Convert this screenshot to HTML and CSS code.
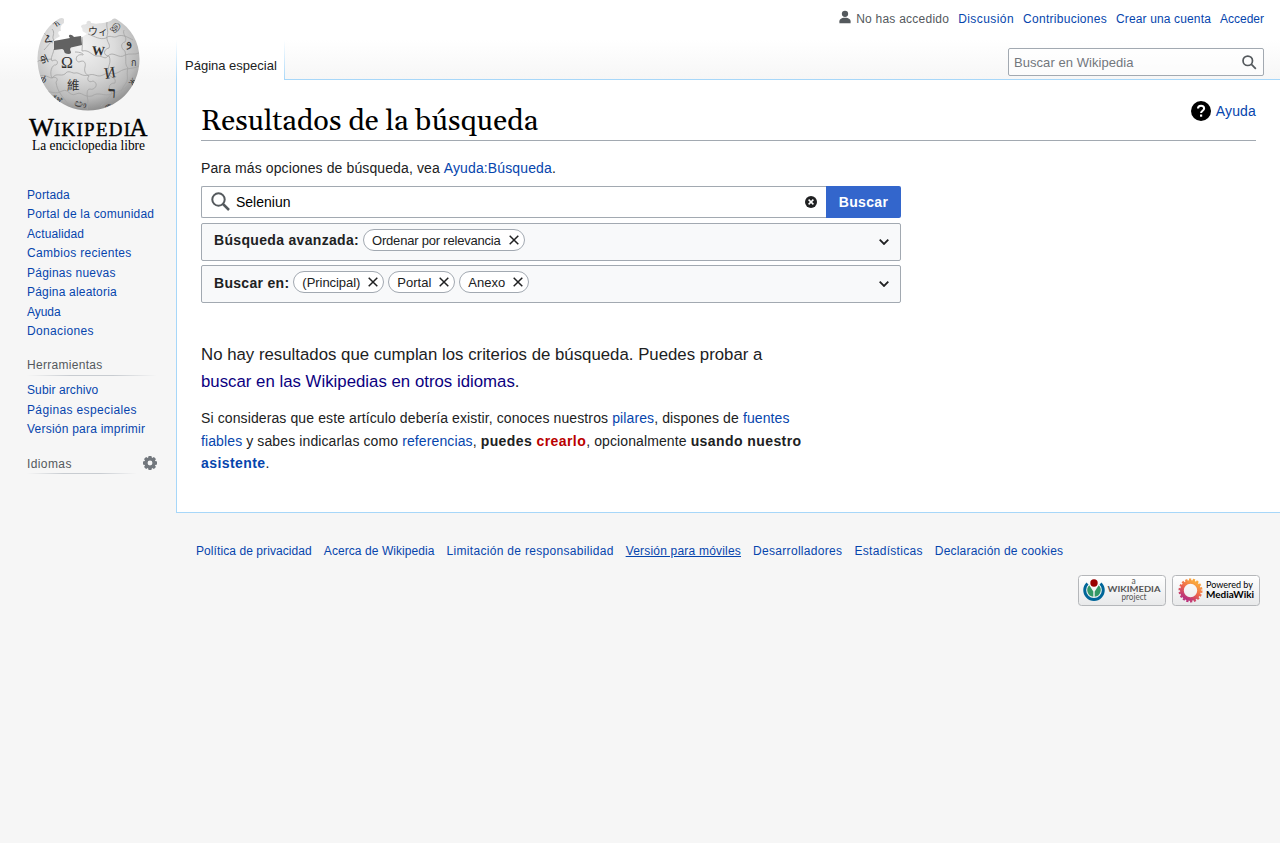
FILE: index.html
```html
<!DOCTYPE html>
<html lang="es">
<head>
<meta charset="utf-8">
<title>Resultados de la búsqueda - Wikipedia, la enciclopedia libre</title>
<link rel="stylesheet" href="styles.css">
</head>
<body>
<div class="page">
<aside class="sidebar">
<a class="logo">
<svg width="160" height="160" viewBox="8 0 160 160">
<defs>
<radialGradient id="globe" cx="0.42" cy="0.3" r="0.74">
<stop offset="0" stop-color="#f3f3f3"/><stop offset="0.45" stop-color="#dcdcdc"/><stop offset="0.78" stop-color="#b8b8b8"/><stop offset="1" stop-color="#858585"/>
</radialGradient>
<clipPath id="ball"><path id="shape" d="M64 19 C62 17 60 18 57 20 C46 27 38 41 37.500 58 C37 88 60 110.500 88 110.500 C117 110.500 139.500 88 139.500 59 C139.500 42 131 28 117 19.500 C115 17.500 112 19 112 20 C107 23 102 23 98 23.500 C95 24 92 23 91 23 C91 20 86 20 86.500 24 C84 25 81 24 81 27 C84 29 81 31 84 32 L87 34 L82 37 L73 39 L54 41 C55 38 58 38 60 36 C57 33 58 31 61 31 C60 27 61 25 64 23 Z"/></clipPath>
</defs>
<use href="#shape" fill="url(#globe)"/>
<g clip-path="url(#ball)">
<g fill="none" stroke="#a3a3a3" stroke-width="0.800">
<path d="M54 49 C53 55 50 58 52 61 C57 58 59 63 56 65 C52 64 49 73 52 78 C56 76 59 79 56 82 C57 92 64 98 68 104"/>
<path d="M37 62 C42 58 47 60 52 59 M40 76 C45 74 49 78 52 78 C57 72 60 77 65 74 C68 69 73 74 75 73 C80 72 81 77 89 75 C95 73 97 78 103 75 C110 71 112 76 119 72 C126 67 131 70 139 66"/>
<path d="M75 52 C81 52 84 54 83 55 C76 53 74 61 79 62 C85 59 86 64 85 67 C84 71 85 74 89 76 C86 80 89 83 93 81 C100 84 94 91 90 89 C86 89 87 96 88 101 C87 105 88 107 87 110"/>
<path d="M82 37 C83 43 82 47 82 51 C90 49 92 57 98 56 C103 56 105 60 108 56 C113 50 119 60 125 55 C130 53 135 55 139 53 M88 34 C96 37 100 40 106 38 C110 34 113 39 118 36 C123 34 129 38 133 40"/>
<path d="M107 22 C106 28 109 31 107 36 C106 42 111 44 109 48 C103 49 103 56 109 56 C112 63 107 67 108 72 C108 78 117 76 115 83 C108 83 108 89 112 93 C109 98 105 101 101 106"/>
<path d="M124 30 C122 35 128 37 125 42 C120 43 121 49 125 51 C127 60 124 64 128 68 C126 73 129 79 126 83 C122 88 121 94 115 97 M45 92 C53 91 55 95 62 91 C69 88 69 97 76 94 C82 91 84 98 92 96 C99 91 104 97 111 94 C120 91 123 90 130 84 M52 29 C56 33 51 37 54 40 C49 43 48 46 44 50 M44 33 C49 37 48 41 53 43"/>
</g>
<g class="globe-glyphs">
<text x="61" y="68" font-size="16">Ω</text>
<text x="92" y="55" font-size="13" font-weight="bold" transform="rotate(3 98 51)" textLength="13" lengthAdjust="spacingAndGlyphs">W</text>
<text x="104" y="78" font-size="16" transform="rotate(-10 110 72)">И</text>
<text x="67" y="90" font-size="12.500" class="han">維</text>
<text x="88" y="35" font-size="10" class="han">ウィ</text>
<text x="108" y="98" font-size="16" font-weight="bold" transform="rotate(3 112 93)">ר</text>
<text x="112" y="31" font-size="9" transform="rotate(35 117 27)">இ</text>
<text x="125" y="46" font-size="13" transform="rotate(-18 128 42)">و</text>
<text x="40" y="63" font-size="11" transform="rotate(65 44 59)">क</text>
<text x="41" y="83" font-size="10" transform="rotate(30 45 78)">ф</text>
<text x="44" y="43" font-size="11" transform="rotate(-25 48 40)">Հ</text>
<text x="74" y="107" font-size="10" transform="rotate(9 78 105)">ඐ</text>
<text x="53" y="100" font-size="8" transform="rotate(38 56 97)">ჯฬ</text>
<text x="131" y="66" font-size="9">ก</text>
<text x="129" y="85" font-size="8" transform="rotate(-52 132 82)">Ж</text>
<text x="54" y="27" font-size="8" transform="rotate(-35 56 25)">Ћ</text>
<text x="104" y="109" font-size="7" transform="rotate(-24 108 106)">ም</text>
</g>
</g>
<path d="M54 41 L70 38 C67 35 71 33 74 37 L81 36 L82 45 L71 47.500 C68 50 74 53 69 54 C62 54 66 50 62 49 L54 50 Z" fill="#626262"/>
<g class="wordmark"><text x="29" y="135.500" font-size="25" textLength="25" lengthAdjust="spacingAndGlyphs">W</text><text x="54" y="135.500" font-size="19" textLength="76" lengthAdjust="spacing">IKIPEDI</text><text x="129.500" y="135.500" font-size="25" textLength="18" lengthAdjust="spacingAndGlyphs">A</text>
<text class="tagline" x="32" y="150" font-size="14" textLength="113" lengthAdjust="spacingAndGlyphs">La enciclopedia libre</text></g>
</svg>
</a>
<nav class="portal main-nav"><a>Portada</a><a>Portal de la comunidad</a><a>Actualidad</a><a>Cambios recientes</a><a>Páginas nuevas</a><a>Página aleatoria</a><a>Ayuda</a><a>Donaciones</a></nav>
<nav class="portal tools"><h3>Herramientas</h3><a>Subir archivo</a><a>Páginas especiales</a><a>Versión para imprimir</a></nav>
<div class="portal languages"><h3>Idiomas</h3><svg width="14" height="14" viewBox="0 0 20 20"><g fill="#72777d"><path id="tooth" d="M8 0h4l1.500 5h-7zM6.500 15h7L12 20H8z"/><use href="#tooth" transform="rotate(45 10 10)"/><use href="#tooth" transform="rotate(90 10 10)"/><use href="#tooth" transform="rotate(135 10 10)"/></g><circle cx="10" cy="10" r="5.500" fill="none" stroke="#72777d" stroke-width="4"/></svg></div>
</aside>
<div class="main">
<header class="header">
<nav class="personal"><span class="anon"><svg width="14" height="14" viewBox="0 0 20 20" fill="#54595d"><path d="M10 11c-5.920 0-8 3-8 5v3h16v-3c0-2-2.080-5-8-5z"/><circle cx="10" cy="5.500" r="4.500"/></svg>No has accedido</span><a>Discusión</a><a>Contribuciones</a><a>Crear una cuenta</a><a>Acceder</a></nav>
<div class="tabs"><span class="tab">Página especial</span><div class="quick-search"><span>Buscar en Wikipedia</span><svg width="15" height="15" viewBox="0 0 13 13"><g fill="none" stroke="#54595d" stroke-width="1.500"><path d="M12 12 8 8"/><circle cx="5" cy="5" r="4.100"/></g></svg></div></div>
</header>
<main class="content">
<div class="heading"><h1>Resultados de la búsqueda</h1><a class="help"><svg width="20" height="20" viewBox="0 0 20 20"><circle cx="10" cy="10" r="10"/><path d="M7 7.600C7 3.800 13.100 3.800 13.100 7.500C13.100 9.800 10.100 9.700 10.100 12" fill="none" stroke="#fff" stroke-width="2.100"/><path d="M9 13.500h2.200v2.200H9z" fill="#fff"/></svg>Ayuda</a></div>
<p class="intro">Para más opciones de búsqueda, vea <a>Ayuda:Búsqueda</a>.</p>
<div class="search-form">
<div class="search-row"><div class="search-input"><svg width="20" height="20" viewBox="0 0 20 20" fill="none" stroke="#54595d" stroke-width="2"><circle cx="7.500" cy="7.500" r="6.200"/><path d="m12 12 6 6" stroke-width="2.500"/></svg><span>Seleniun</span><svg class="clear" width="12" height="12" viewBox="0 0 20 20"><circle cx="10" cy="10" r="10" fill="#202122"/><path d="m6 6 8 8m0-8-8 8" stroke="#fff" stroke-width="2.500"/></svg></div><button>Buscar</button></div>
<div class="option"><b>Búsqueda avanzada:</b><span class="chip long">Ordenar por relevancia<svg class="x" viewBox="0 0 10 10"><path d="m.7.7 8.600 8.600m0-8.600L.7 9.300"/></svg></span><svg class="chevron" viewBox="0 0 10 6"><path d="m.7.700 4.300 4.300L9.300.7"/></svg></div>
<div class="option second"><b>Buscar en:</b><span class="chip first">(Principal)<svg class="x" viewBox="0 0 10 10"><path d="m.7.7 8.600 8.600m0-8.600L.7 9.300"/></svg></span><span class="chip">Portal<svg class="x" viewBox="0 0 10 10"><path d="m.7.7 8.600 8.600m0-8.600L.7 9.300"/></svg></span><span class="chip">Anexo<svg class="x" viewBox="0 0 10 10"><path d="m.7.7 8.600 8.600m0-8.600L.7 9.300"/></svg></span><svg class="chevron" viewBox="0 0 10 6"><path d="m.7.700 4.300 4.300L9.300.7"/></svg></div>
</div>
<div class="results"><p class="none">No hay resultados que cumplan los criterios de búsqueda. Puedes probar a <a class="visited">buscar en las Wikipedias en otros idiomas</a>.</p>
<p class="suggest">Si consideras que este artículo debería existir, conoces nuestros <a>pilares</a>, dispones de <a>fuentes fiables</a> y sabes indicarlas como <a>referencias</a>, <b>puedes <a class="new">crearlo</a></b>, opcionalmente <b>usando nuestro <a>asistente</a></b>.</p></div>
</main>
<footer class="footer">
<nav><a>Política de privacidad</a><a>Acerca de Wikipedia</a><a>Limitación de responsabilidad</a><a class="hovered">Versión para móviles</a><a>Desarrolladores</a><a>Estadísticas</a><a>Declaración de cookies</a></nav>
<div class="badges">
<svg width="88" height="31" viewBox="0 0 88 31"><defs><linearGradient id="badge" x2="0" y2="1"><stop stop-color="#fff"/><stop offset="1" stop-color="#e8e9ea"/></linearGradient></defs><rect x=".5" y=".5" width="87" height="30" rx="3" fill="url(#badge)" stroke="#b5b7ba"/><g fill="none"><path d="M9.500 8.500A9.300 9.300 0 1 0 22.500 8.500" stroke="#006699" stroke-width="2.900"/><path d="M11.300 10.300A6.700 6.700 0 0 0 15.300 21.800V16.500Zm9.400 0A6.700 6.700 0 0 1 16.700 21.800V16.500Z" fill="#339966"/></g><circle cx="16" cy="8" r="3.700" fill="#900"/><g class="badge-text" fill="#555"><text x="53.500" y="8.500" font-size="8.500">a</text><text x="29.500" y="17.300" font-size="8" font-weight="bold" textLength="53" lengthAdjust="spacingAndGlyphs">WIKIMEDIA</text><text x="43.500" y="25" font-size="8.500" textLength="25" lengthAdjust="spacingAndGlyphs">project</text></g></svg>
<svg width="88" height="31" viewBox="0 0 88 31"><defs><linearGradient id="sun" x1=".8" y1="0" x2=".2" y2="1"><stop stop-color="#fbb03b"/><stop offset=".5" stop-color="#ed654d"/><stop offset="1" stop-color="#b22b83"/></linearGradient></defs><rect x=".5" y=".5" width="87" height="30" rx="3" fill="url(#badge)" stroke="#b5b7ba"/><g fill="none" stroke="url(#sun)"><circle cx="18.500" cy="15.500" r="8.600" stroke-width="3.800"/><circle cx="18.500" cy="15.500" r="10.700" stroke-width="2.600" stroke-dasharray="2.200 1.540"/></g><g class="badge-text" fill="#000"><text x="34" y="12.500" font-size="9" textLength="47" lengthAdjust="spacingAndGlyphs">Powered by</text><text x="34" y="22.500" font-size="9.500" font-weight="bold" textLength="48" lengthAdjust="spacingAndGlyphs">MediaWiki</text></g></svg>
</div>
</footer>
</div>
</div>
</body>
</html>
```
FILE: styles.css
```css
* { box-sizing: border-box; }
body { margin: 0; background: #f6f6f6; color: #202122; font-family: "Liberation Sans", sans-serif; font-size: 14px; }
a { color: #0645ad; text-decoration: none; }
svg { display: block; flex: none; }
h1, h3, p { margin: 0; font-weight: normal; }
.page { display: grid; grid-template-columns: 176px 1fr; min-height: 843px; background: linear-gradient(#fff 40px, #f6f6f6 80px); }
.sidebar { display: flex; flex-direction: column; font-size: 12px; }
.logo { height: 160px; margin-left: 8px; }
.globe-glyphs { font-family: "Liberation Serif", "Noto Sans", "DejaVu Sans", serif; fill: #303030; }
.globe-glyphs .han { font-family: "Noto Sans CJK TC", sans-serif; }
.wordmark { font-family: "Liberation Serif", serif; fill: #000; stroke: #000; stroke-width: .4px; }
.tagline { stroke-width: 0; }
.portal { display: flex; flex-direction: column; margin-left: 27px; line-height: 13.500px; gap: 6px; letter-spacing: .2px; }
.main-nav { margin-top: 28.500px; }
.main-nav a:nth-child(1), .main-nav a:nth-child(3) { letter-spacing: .1px; }
.main-nav a:nth-child(4) { letter-spacing: .31px; }
.main-nav a:nth-child(5) { letter-spacing: .23px; }
.main-nav a:nth-child(7) { letter-spacing: -.05px; }
.main-nav a:nth-child(8) { letter-spacing: .35px; }
.portal h3 { font-size: 12px; line-height: 20px; height: 21px; letter-spacing: .35px; color: #54595d; background: linear-gradient(to right, transparent, #c8ccd1 33%, #c8ccd1 66%, transparent) left bottom / 100% 1px no-repeat; }
.tools { margin-top: 16.500px; margin-right: 19px; }
.tools h3 { margin-bottom: 2px; letter-spacing: .3px; }
.tools a:nth-of-type(1) { letter-spacing: .1px; }
.tools a:nth-of-type(2) { letter-spacing: .36px; }
.tools a:nth-of-type(3) { letter-spacing: .23px; }
.languages { flex-direction: row; margin-top: 16px; gap: 6px; }
.languages h3 { width: 110px; line-height: 22px; letter-spacing: .4px; }
.languages svg { margin-top: 3px; }
.header { height: 80px; display: flex; flex-direction: column; justify-content: space-between; }
.personal { display: flex; justify-content: flex-end; gap: 9px; padding: 9px 16px 0 0; font-size: 12px; line-height: 20px; }
.anon { display: flex; gap: 4px; color: #54595d; letter-spacing: .24px; }
.personal a:nth-of-type(1) { letter-spacing: .43px; }
.personal a:nth-of-type(2) { letter-spacing: .28px; }
.personal a:nth-of-type(3) { letter-spacing: .14px; }
.anon svg { margin-top: 1px; }
.tabs { display: flex; justify-content: space-between; height: 40px; background: linear-gradient(#a7d7f9, #a7d7f9) bottom / 100% 1px no-repeat; }
.tab { width: 109px; padding: 17px 0 0 9px; font-size: 13px; line-height: 17px; white-space: nowrap; background: linear-gradient(#fff, #a7d7f9) left / 1px 100% no-repeat, linear-gradient(#fff, #a7d7f9) right / 1px 100% no-repeat, #fff; }
.quick-search { display: flex; align-items: center; justify-content: space-between; width: 256px; height: 28px; margin: 8px 16px 0 0; padding: 0 6px 0 5px; border: 1px solid #a2a9b1; border-radius: 2px; background: rgba(255,255,255,.5); color: #72777d; font-size: 13px; letter-spacing: .05px; }
.content { height: 433px; padding: 20px 24px; background: #fff; border: solid #a7d7f9; border-width: 0 0 1px 1px; }
.heading { display: flex; justify-content: space-between; height: 41px; border-bottom: 1px solid #a2a9b1; }
h1 { font-family: Georgia, "Gelasio", "Liberation Serif", serif; font-size: 28.800px; line-height: 37px; padding-top: 3px; height: 40px; color: #000; }
.help { display: flex; gap: 5px; line-height: 20px; padding-top: 1px; letter-spacing: .15px; }
.intro { margin-top: 16px; line-height: 22px; letter-spacing: .11px; }
.intro a { letter-spacing: .12px; }
.search-form { width: 700px; margin-top: 7px; }
.search-row { display: flex; height: 32px; }
.search-input { display: flex; align-items: center; flex: 1; padding: 0 9px; gap: 5px; border: 1px solid #a2a9b1; border-right: 0; border-radius: 2px 0 0 2px; color: #000; }
.clear { margin-left: auto; }
button { width: 75px; border: 0; border-radius: 0 2px 2px 0; background: #36c; color: #fff; font: bold 14px "Liberation Sans", sans-serif; letter-spacing: .35px; padding: 0; }
.option { display: flex; align-items: center; gap: 4px; height: 38px; margin-top: 5px; padding: 0 11px 4px 12px; border: 1px solid #a2a9b1; border-radius: 2px; background: #f8f9fa; }
.option b { letter-spacing: .32px; }
.second { margin-top: 4px; }
.second b { position: relative; top: 1px; letter-spacing: .3px; }
.chip { display: flex; align-items: center; gap: 8px; height: 22px; padding: 0 5px 0 8px; border: 1px solid #a2a9b1; border-radius: 11px; background: #fff; font-size: 13px; }
.long { letter-spacing: -.2px; }
.first { letter-spacing: -.05px; }
.x { width: 10px; height: 10px; fill: none; stroke: #202122; stroke-width: 1.500; }
.chevron { width: 10px; height: 6px; margin: 4px 0 0 auto; fill: none; stroke: #202122; stroke-width: 1.800; }
.results { width: 606px; margin-top: 38px; }
.none { font-size: 16.800px; line-height: 27px; letter-spacing: .01px; }
.visited { color: #0b0080; }
.new { color: #ba0000; }
.suggest { margin-top: 12px; line-height: 22.500px; letter-spacing: .11px; }
.suggest b { letter-spacing: .42px; }
.footer { padding: 27px 20px 0; font-size: 12px; }
.footer nav { display: flex; gap: 12px; line-height: 22px; letter-spacing: .08px; }
.footer a:nth-child(2) { letter-spacing: .07px; }
.footer a:nth-child(3), .footer a:nth-child(5), .footer a:nth-child(6) { letter-spacing: .31px; }
.footer a:nth-child(4), .footer a:nth-child(7) { letter-spacing: .2px; }
.hovered { text-decoration: underline; }
.badges { display: flex; justify-content: flex-end; gap: 6px; margin-top: 13px; }
.badge-text { font-family: Lato, sans-serif; }
```
